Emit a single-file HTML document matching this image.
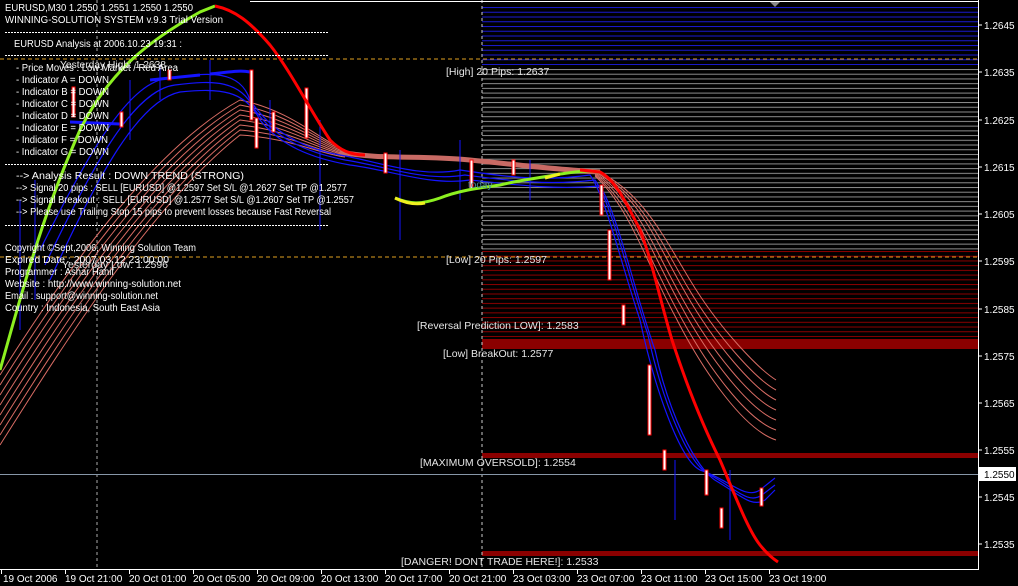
<!DOCTYPE html>
<html><head><meta charset="utf-8"><style>
html,body{margin:0;padding:0;background:#000;overflow:hidden}
svg{display:block}
text{font-family:"Liberation Sans",sans-serif;font-size:10px;fill:#fff}
.ax{font-size:10px;fill:#fff}
.lb{fill:#e6e6e6;font-size:10.5px}
</style></head><body>
<svg width="1018" height="586" viewBox="0 0 1018 586" xmlns="http://www.w3.org/2000/svg">
<defs>
<pattern id="pb" x="0" y="7" width="10" height="4.75" patternUnits="userSpaceOnUse"><rect width="10" height="1" fill="#1a1ad0"/></pattern>
<pattern id="pg" x="0" y="69" width="10" height="4.72" patternUnits="userSpaceOnUse"><rect width="10" height="1" fill="#8c8c8c"/></pattern>
<pattern id="pr" x="0" y="251" width="10" height="4.72" patternUnits="userSpaceOnUse"><rect width="10" height="1" fill="#8b0000"/></pattern>
</defs>
<rect width="1018" height="586" fill="#000"/>
<rect x="482" y="7" width="496" height="58" fill="url(#pb)"/>
<rect x="482" y="69" width="496" height="182" fill="url(#pg)"/>
<rect x="482" y="251" width="496" height="86" fill="url(#pr)"/>
<rect x="482" y="339" width="496" height="10" fill="#8b0000"/>
<rect x="482" y="453" width="496" height="5" fill="#8b0000"/>
<rect x="482" y="551" width="496" height="5" fill="#8b0000"/>
<line x1="0" y1="59" x2="978" y2="59" stroke="#e0a020" stroke-dasharray="4,3"/>
<line x1="0" y1="257" x2="978" y2="257" stroke="#e0a020" stroke-dasharray="4,3"/>
<line x1="97" y1="0" x2="97" y2="569" stroke="#aaa" stroke-dasharray="3,3"/>
<line x1="482" y1="0" x2="482" y2="569" stroke="#ccc" stroke-dasharray="3,3"/>
<line x1="250" y1="1.5" x2="978" y2="1.5" stroke="#fff"/>
<line x1="0" y1="474.5" x2="978" y2="474.5" stroke="#8797a8"/>
<polygon points="770,2 780,2 775,7" fill="#888"/>

<g fill="none" stroke="#d86c64" stroke-width="1">
<path d="M0,375 C60,280 150,150 240,100 C290,110 320,140 345,150"/>
<path d="M0,385 C60,290 150,158 240,105 C290,114 320,142 345,151"/>
<path d="M0,395 C60,300 150,166 240,110 C290,118 320,144 345,152"/>
<path d="M0,405 C60,310 150,174 240,115 C290,122 320,146 345,153"/>
<path d="M0,415 C60,320 150,182 240,120 C290,126 320,148 345,154"/>
<path d="M0,425 C60,330 150,190 240,125 C290,130 320,150 345,155"/>
<path d="M0,435 C60,340 150,198 240,130 C290,134 320,152 345,156"/>
<path d="M0,445 C60,350 150,206 240,135 C290,138 320,154 345,157"/>
<path d="M595,170 C640,190 660,230 690,280 C720,330 760,370 776,380"/>
<path d="M595,171 C640,193 657,235 687,286 C717,337 757,380 776,390"/>
<path d="M595,172 C640,196 655,240 685,292 C715,345 755,390 776,400"/>
<path d="M595,173 C637,199 652,245 682,298 C712,352 752,400 776,410"/>
<path d="M595,174 C635,202 650,250 680,304 C710,360 750,410 776,420"/>
<path d="M595,175 C632,205 647,255 677,310 C707,367 747,420 776,430"/>
<path d="M595,176 C630,208 645,260 675,316 C705,375 745,430 776,440"/>
</g>
<path d="M340,152 C380,160 420,155 470,160 C520,165 560,170 600,172" fill="none" stroke="#c86a64" stroke-width="5"/>

<g fill="none" stroke="#1414ff" stroke-width="1.2">
<path d="M40,250 C90,150 130,80 170,78 C210,72 240,70 250,100 C270,130 300,148 340,155 C380,162 420,178 460,170 C500,176 540,182 590,175 C605,195 620,260 640,320 C655,390 680,460 700,470 C730,480 745,500 760,490 L775,478"/>
<path d="M45,265 C95,160 135,90 175,85 C215,80 240,80 255,110 C275,138 305,152 345,160 C385,166 425,182 465,175 C505,180 545,186 595,180 C612,205 628,275 648,335 C662,400 688,465 710,475 C735,488 748,505 762,495 L775,485"/>
<path d="M50,280 C100,170 140,100 180,92 C220,88 245,90 260,120 C280,145 310,158 350,165 C390,170 430,186 470,180 C510,184 550,190 600,186 C618,215 634,290 655,350 C668,410 695,470 718,482 C740,495 752,508 765,500 L775,490"/>
<path d="M210,74 C230,72 240,70 250,72" stroke-width="3"/>
<path d="M150,80 L200,75" stroke-width="3"/>
<path d="M70,122 L120,124" stroke-width="3"/>
</g>
<g stroke="#1414ff" fill="none">
<line x1="20" y1="200" x2="20" y2="330"/><line x1="35" y1="180" x2="35" y2="300"/>
<line x1="130" y1="80" x2="130" y2="140"/><line x1="160" y1="65" x2="160" y2="100"/>
<line x1="210" y1="60" x2="210" y2="100"/><line x1="270" y1="100" x2="270" y2="160"/>
<line x1="320" y1="120" x2="320" y2="230"/><line x1="400" y1="150" x2="400" y2="240"/>
<line x1="460" y1="140" x2="460" y2="200"/><line x1="530" y1="160" x2="530" y2="200"/>
<line x1="675" y1="460" x2="675" y2="520"/><line x1="730" y1="470" x2="730" y2="540"/>
</g>
<g fill="#fff" stroke="#f00" stroke-width="1">
<rect x="72" y="87" width="3" height="30"/><rect x="120" y="112" width="3" height="15"/>
<rect x="168" y="70" width="3" height="10"/><rect x="250" y="70" width="3" height="50"/>
<rect x="255" y="118" width="3" height="30"/><rect x="272" y="112" width="3" height="20"/>
<rect x="305" y="88" width="3" height="50"/><rect x="384" y="153" width="3" height="20"/>
<rect x="470" y="160" width="3" height="30"/><rect x="512" y="160" width="3" height="15"/>
<rect x="600" y="185" width="3" height="30"/><rect x="608" y="230" width="3" height="50"/>
<rect x="622" y="305" width="3" height="20"/><rect x="648" y="365" width="3" height="70"/>
<rect x="663" y="450" width="3" height="20"/><rect x="705" y="470" width="3" height="25"/>
<rect x="720" y="508" width="3" height="20"/><rect x="760" y="488" width="3" height="18"/>
</g>

<path d="M0,370 C20,300 40,220 80,130 C110,70 150,40 200,12 L215,6" fill="none" stroke="#8cf020" stroke-width="3"/>
<path d="M215,6 C235,10 250,22 270,45 C290,70 310,110 330,140 C340,150 350,155 365,155" fill="none" stroke="#f00" stroke-width="3"/>
<path d="M395,198 C410,204 420,205 440,198 C460,190 480,188 500,185 C520,180 540,178 560,174 C575,172 585,170 600,172" fill="none" stroke="#8cf020" stroke-width="3"/>
<path d="M395,198 C405,203 415,205 425,203 M545,178 L560,174" fill="none" stroke="#f0f020" stroke-width="3"/>
<path d="M580,170 L600,172 C615,180 625,200 640,230 C652,260 660,300 672,340 C685,380 700,420 720,460 C735,495 748,530 760,545 C768,555 775,560 778,562" fill="none" stroke="#f00" stroke-width="3"/>
<text x="468" y="188" style="fill:#4a8ca0;font-size:10px">today</text>

<g stroke="#fff" stroke-dasharray="2,1">
<line x1="5" y1="32.5" x2="328" y2="32.5"/><line x1="5" y1="55.5" x2="328" y2="55.5"/>
<line x1="5" y1="164.5" x2="328" y2="164.5"/><line x1="5" y1="225.5" x2="328" y2="225.5"/>
</g>
<g>
<text x="5" y="11" textLength="188" lengthAdjust="spacingAndGlyphs">EURUSD,M30  1.2550 1.2551 1.2550 1.2550</text>
<text x="5" y="23" textLength="218" lengthAdjust="spacingAndGlyphs">WINNING-SOLUTION SYSTEM v.9.3 Trial Version</text>
<text x="14" y="47" textLength="168" lengthAdjust="spacingAndGlyphs">EURUSD Analysis at 2006.10.23 19:31 :</text>
<text x="60" y="68" class="lb" textLength="106" lengthAdjust="spacingAndGlyphs">Yesterday High: 1.2638</text>
<text x="16" y="71" textLength="162" lengthAdjust="spacingAndGlyphs">- Price Moves : Low Market / Red Area</text>
<text x="16" y="83" textLength="93" lengthAdjust="spacingAndGlyphs">- Indicator A = DOWN</text>
<text x="16" y="95" textLength="93" lengthAdjust="spacingAndGlyphs">- Indicator B = DOWN</text>
<text x="16" y="107" textLength="93" lengthAdjust="spacingAndGlyphs">- Indicator C = DOWN</text>
<text x="16" y="119" textLength="93" lengthAdjust="spacingAndGlyphs">- Indicator D = DOWN</text>
<text x="16" y="131" textLength="93" lengthAdjust="spacingAndGlyphs">- Indicator E = DOWN</text>
<text x="16" y="143" textLength="92" lengthAdjust="spacingAndGlyphs">- Indicator F = DOWN</text>
<text x="16" y="155" textLength="93" lengthAdjust="spacingAndGlyphs">- Indicator G = DOWN</text>
<text x="16" y="179" textLength="228" lengthAdjust="spacingAndGlyphs">--&gt;  Analysis Result : DOWN TREND (STRONG)</text>
<text x="16" y="191" textLength="331" lengthAdjust="spacingAndGlyphs">--&gt;  Signal 20 pips : SELL [EURUSD] @1.2597 Set S/L @1.2627 Set TP @1.2577</text>
<text x="16" y="203" textLength="338" lengthAdjust="spacingAndGlyphs">--&gt;  Signal Breakout : SELL [EURUSD] @1.2577 Set S/L @1.2607 Set TP @1.2557</text>
<text x="16" y="215" textLength="315" lengthAdjust="spacingAndGlyphs">--&gt;  Please use Trailing Stop 15 pips to prevent losses because Fast Reversal</text>
<text x="5" y="251" textLength="191" lengthAdjust="spacingAndGlyphs">Copyright ©Sept,2006, Winning Solution Team</text>
<text x="5" y="263" textLength="164" lengthAdjust="spacingAndGlyphs">Expired Date : 2007.03.12 23:00:00</text>
<text x="62" y="268" class="lb" textLength="106" lengthAdjust="spacingAndGlyphs">Yesterday Low: 1.2596</text>
<text x="5" y="275" textLength="109" lengthAdjust="spacingAndGlyphs">Programmer : Ashar Hanif</text>
<text x="5" y="287" textLength="176" lengthAdjust="spacingAndGlyphs">Website : http://www.winning-solution.net</text>
<text x="5" y="299" textLength="153" lengthAdjust="spacingAndGlyphs">Email : support@winning-solution.net</text>
<text x="5" y="311" textLength="155" lengthAdjust="spacingAndGlyphs">Country : Indonesia, South East Asia</text>
</g>

<text x="446" y="75" class="lb">[High] 20 Pips: 1.2637</text>
<text x="446" y="263" class="lb">[Low] 20 Pips: 1.2597</text>
<text x="417" y="329" class="lb">[Reversal Prediction LOW]: 1.2583</text>
<text x="443" y="357" class="lb">[Low] BreakOut: 1.2577</text>
<text x="420" y="466" class="lb">[MAXIMUM OVERSOLD]: 1.2554</text>
<text x="401" y="565" class="lb">[DANGER! DONT TRADE HERE!]: 1.2533</text>

<line x1="978.5" y1="0" x2="978.5" y2="570" stroke="#fff"/>
<line x1="0" y1="569.5" x2="979" y2="569.5" stroke="#fff"/>
<g stroke="#fff">
<line x1="978" y1="25" x2="982" y2="25"/><line x1="978" y1="72" x2="982" y2="72"/><line x1="978" y1="120" x2="982" y2="120"/>
<line x1="978" y1="167" x2="982" y2="167"/><line x1="978" y1="214" x2="982" y2="214"/><line x1="978" y1="261" x2="982" y2="261"/>
<line x1="978" y1="309" x2="982" y2="309"/><line x1="978" y1="356" x2="982" y2="356"/><line x1="978" y1="403" x2="982" y2="403"/>
<line x1="978" y1="450" x2="982" y2="450"/><line x1="978" y1="497" x2="982" y2="497"/><line x1="978" y1="544" x2="982" y2="544"/>
<line x1="1.5" y1="569" x2="1.5" y2="574"/><line x1="65.5" y1="569" x2="65.5" y2="574"/><line x1="129.5" y1="569" x2="129.5" y2="574"/>
<line x1="193.5" y1="569" x2="193.5" y2="574"/><line x1="257.5" y1="569" x2="257.5" y2="574"/><line x1="321.5" y1="569" x2="321.5" y2="574"/>
<line x1="385.5" y1="569" x2="385.5" y2="574"/><line x1="449.5" y1="569" x2="449.5" y2="574"/><line x1="513.5" y1="569" x2="513.5" y2="574"/>
<line x1="577.5" y1="569" x2="577.5" y2="574"/><line x1="641.5" y1="569" x2="641.5" y2="574"/><line x1="705.5" y1="569" x2="705.5" y2="574"/>
<line x1="769.5" y1="569" x2="769.5" y2="574"/>
</g>
<text class="ax" x="984" y="29">1.2645</text><text class="ax" x="984" y="76">1.2635</text><text class="ax" x="984" y="124">1.2625</text>
<text class="ax" x="984" y="171">1.2615</text><text class="ax" x="984" y="218">1.2605</text><text class="ax" x="984" y="265">1.2595</text>
<text class="ax" x="984" y="313">1.2585</text><text class="ax" x="984" y="360">1.2575</text><text class="ax" x="984" y="407">1.2565</text>
<text class="ax" x="984" y="454">1.2555</text><text class="ax" x="984" y="501">1.2545</text><text class="ax" x="984" y="548">1.2535</text>
<rect x="979" y="467" width="37" height="14" fill="#fff"/>
<text class="ax" x="984" y="478" style="fill:#000">1.2550</text>
<text class="ax" x="3" y="582">19 Oct 2006</text>
<text class="ax" x="65" y="582">19 Oct 21:00</text>
<text class="ax" x="129" y="582">20 Oct 01:00</text>
<text class="ax" x="193" y="582">20 Oct 05:00</text>
<text class="ax" x="257" y="582">20 Oct 09:00</text>
<text class="ax" x="321" y="582">20 Oct 13:00</text>
<text class="ax" x="385" y="582">20 Oct 17:00</text>
<text class="ax" x="449" y="582">20 Oct 21:00</text>
<text class="ax" x="513" y="582">23 Oct 03:00</text>
<text class="ax" x="577" y="582">23 Oct 07:00</text>
<text class="ax" x="641" y="582">23 Oct 11:00</text>
<text class="ax" x="705" y="582">23 Oct 15:00</text>
<text class="ax" x="769" y="582">23 Oct 19:00</text>
</svg>
</body></html>
